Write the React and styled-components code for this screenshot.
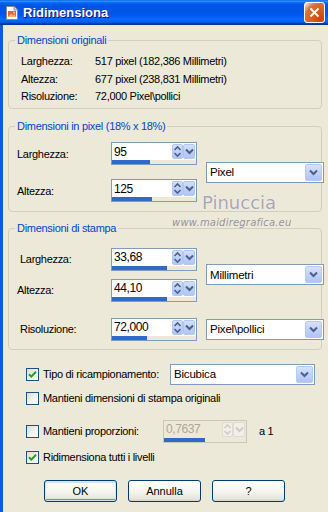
import React from "react";
import styled, { createGlobalStyle } from "styled-components";

const FONT = `"Liberation Sans", Arial, sans-serif`;

const Global = createGlobalStyle`
  html, body { margin: 0; padding: 0; background: #ECE9D8; }
  body { width: 328px; height: 512px; overflow: hidden; }
  *, *::before, *::after { box-sizing: border-box; }
`;

const Window = styled.div`
  width: 328px;
  height: 512px;
  display: flex;
  flex-direction: column;
  background: #ECE9D8;
  font-family: ${FONT};
  font-size: 11px;
  letter-spacing: -0.3px;
  color: #000;
  position: relative;
  overflow: hidden;
`;

const TitleBar = styled.div`
  height: 25px;
  flex: none;
  display: flex;
  align-items: center;
  padding: 0 3px 0 4px;
  background: linear-gradient(180deg, #0058EE 0%, #3593FF 4%, #288EFF 6%, #127DFF 8%, #036FFC 10%, #0262EE 14%, #0057E5 20%, #0054E3 24%, #0055EB 56%, #005BF5 66%, #026AFE 76%, #0062EF 86%, #0052D6 92%, #0040AB 94%, #003092 100%);
`;

const TitleIcon = styled.svg`
  flex: none;
  margin-right: 3px;
`;

const TitleText = styled.span`
  flex: 1;
  color: #fff;
  font-weight: bold;
  font-size: 13px;
  letter-spacing: 0;
  text-shadow: 1px 1px 0 #0F1089;
`;

const CloseButton = styled.div`
  width: 21px;
  height: 21px;
  border: 1px solid #fff;
  border-radius: 3px;
  display: flex;
  align-items: center;
  justify-content: center;
  background: radial-gradient(circle at 85% 85%, #cc4600 0%, #dc6527 55%, #cd7546 70%, #ffccb2 92%, #fff 100%);
`;

const Body = styled.div`
  flex: 1;
  display: flex;
  flex-direction: column;
  border-left: 3px solid #1656E6;
  padding: 0 6px 0 5px;
`;

const Group = styled.fieldset`
  margin: ${(p) => p.$mt}px 0 0;
  padding: 0;
  border: 1px solid #D0D0BF;
  border-radius: 4px;
  min-width: 0;
`;

const Legend = styled.legend`
  margin-left: 6px;
  padding: 0 2px;
  color: #0046D5;
  font-size: 11px;
  line-height: 13px;
`;

const InfoGrid = styled.div`
  display: grid;
  grid-template-columns: 74px 1fr;
  grid-auto-rows: 17.5px;
  align-items: center;
  padding: 5.5px 0 3px 12px;
`;

const SizeGrid = styled.div`
  display: grid;
  grid-template-columns: 93px 86px 118px;
  column-gap: 9px;
  row-gap: ${(p) => p.$rowGap || 0}px;
  align-items: center;
  padding: ${(p) => p.$pt}px 0 ${(p) => p.$pb}px 0;
`;

const FieldLabel = styled.span`
  padding-left: ${(p) => p.$indent}px;
  grid-column: 1;
`;

const SelectCell = styled.div`
  grid-column: 3;
  grid-row: ${(p) => p.$rows};
  align-self: center;
`;

const SpinBox = styled.div`
  width: ${(p) => p.$w || 86}px;
  height: 23px;
  flex: none;
  border: 1px solid ${(p) => (p.$disabled ? "#C9C7BA" : "#7F9DB9")};
  background: ${(p) => (p.$disabled ? "#ECE9D8" : "#fff")};
  display: flex;
  flex-direction: column;
`;

const SpinField = styled.div`
  flex: 1;
  display: flex;
  align-items: center;
  gap: 0;
  padding: 0 1px 0 2px;
`;

const SpinValue = styled.span`
  flex: 1;
  font-size: 12px;
  letter-spacing: -0.4px;
  color: ${(p) => (p.$disabled ? "#ACA899" : "#000")};
`;

const ArrowButton = styled.div`
  width: ${(p) => p.$w}px;
  height: 15px;
  border-radius: 2px;
  border: 1px solid ${(p) => (p.$disabled ? "#DEDCD2" : "#B1C6F2")};
  background: ${(p) =>
    p.$disabled
      ? "#F1EFE7"
      : "linear-gradient(180deg, #D3DFFD 0%, #BED0FA 50%, #B2C6F7 100%)"};
  display: flex;
  flex-direction: column;
  align-items: center;
  justify-content: center;
`;

const Track = styled.div`
  height: 4px;
  flex: none;
  background: #ECE9D8;
`;

const Fill = styled.div`
  height: 100%;
  background: #3169C6;
`;

const SelectBox = styled.div`
  width: ${(p) => p.$w}px;
  height: 21px;
  flex: none;
  margin-left: ${(p) => (p.$push ? "auto" : "0")};
  border: 1px solid #7F9DB9;
  background: #fff;
  display: flex;
  align-items: center;
  padding: 1px;
`;

const SelectText = styled.span`
  flex: 1;
  padding-left: 2px;
  font-size: 11.5px;
  letter-spacing: -0.2px;
`;

const SelectButton = styled.div`
  width: 17px;
  height: 17px;
  border-radius: 2px;
  border: 1px solid #B7CAF5;
  background: linear-gradient(180deg, #D6E2FD 0%, #C0D1FA 50%, #AFC4F6 100%);
  display: flex;
  align-items: center;
  justify-content: center;
`;

const Options = styled.div`
  display: flex;
  flex-direction: column;
  padding: 13.5px 7px 0 18px;
`;

const OptionRow = styled.div`
  display: flex;
  align-items: center;
  height: ${(p) => p.$h}px;
  margin-top: ${(p) => p.$mt || 0}px;
`;

const CheckBox = styled.span`
  width: 13px;
  height: 13px;
  flex: none;
  border: 1px solid #1C5180;
  background: linear-gradient(135deg, #DCDCD7 0%, #F4F4F0 60%, #FFFFFF 100%);
  display: flex;
  align-items: center;
  justify-content: center;
`;

const CheckText = styled.span`
  margin-left: 4px;
  width: ${(p) => (p.$w ? `${p.$w - 4}px` : "auto")};
  flex: none;
  white-space: nowrap;
`;

const Suffix = styled.span`
  margin-left: 12px;
`;

const ButtonRow = styled.div`
  display: flex;
  gap: 11px;
  padding-left: 36px;
  margin-top: 16.5px;
`;

const Button = styled.button`
  width: 73px;
  height: 22px;
  padding: 0;
  font-family: ${FONT};
  font-size: 11px;
  color: #000;
  border: 1px solid #003C74;
  border-radius: 3px;
  background: linear-gradient(180deg, #FFFFFF 0%, #F5F4EF 55%, #E6E4DA 90%, #D6D0C5 100%);
  box-shadow: ${(p) =>
    p.$default
      ? "inset 0 0 0 1px #CEE7FF, inset 0 -2px 0 0 #6982EE, inset 0 2px 0 0 #CEE7FF"
      : "none"};
`;

const Watermark = styled.div`
  position: absolute;
  left: 172px;
  top: 193px;
  display: flex;
  flex-direction: column;
  pointer-events: none;
  font-family: "DejaVu Sans", sans-serif;
  letter-spacing: 0;
`;

const WatermarkName = styled.span`
  margin-left: 30px;
  font-size: 18px;
  line-height: 20px;
  color: rgba(150, 150, 172, 0.85);
  text-shadow: 0 0 1px #fff;
`;

const WatermarkUrl = styled.span`
  margin-top: 3.5px;
  font-size: 10px;
  line-height: 12px;
  font-style: italic;
  letter-spacing: 0.2px;
  color: rgba(130, 130, 150, 0.85);
`;

function UpDown({ disabled }) {
  const c = disabled ? "#CFCDC3" : "#4D6185";
  return (
    <ArrowButton $w={11} $disabled={disabled}>
      <svg width="9" height="13" viewBox="0 0 9 13">
        <path d="M1.5 5 L4.5 2 L7.5 5" stroke={c} strokeWidth="1.6" fill="none" />
        <path d="M1.5 8 L4.5 11 L7.5 8" stroke={c} strokeWidth="1.6" fill="none" />
      </svg>
    </ArrowButton>
  );
}

function Chevron({ color = "#4D6185", size = 9 }) {
  return (
    <svg width={size} height="7" viewBox="0 0 9 7">
      <path d="M1 1.5 L4.5 5 L8 1.5" stroke={color} strokeWidth="2" fill="none" />
    </svg>
  );
}

function SpinInput({ value, fill, w, disabled }) {
  return (
    <SpinBox $w={w} $disabled={disabled}>
      <SpinField>
        <SpinValue $disabled={disabled}>{value}</SpinValue>
        <UpDown disabled={disabled} />
        <ArrowButton $w={12} $disabled={disabled}>
          <Chevron color={disabled ? "#CFCDC3" : "#4D6185"} />
        </ArrowButton>
      </SpinField>
      <Track>
        <Fill style={{ width: `${fill}%` }} />
      </Track>
    </SpinBox>
  );
}

function Select({ value, w, push }) {
  return (
    <SelectBox $w={w} $push={push}>
      <SelectText>{value}</SelectText>
      <SelectButton>
        <Chevron />
      </SelectButton>
    </SelectBox>
  );
}

function Check({ checked }) {
  return (
    <CheckBox>
      {checked && (
        <svg width="9" height="9" viewBox="0 0 9 9">
          <path d="M1 4.2 L3.3 6.6 L8 1.8" stroke="#21A121" strokeWidth="2" fill="none" />
        </svg>
      )}
    </CheckBox>
  );
}

export default function App() {
  return (
    <>
      <Global />
      <Window>
        <TitleBar>
          <TitleIcon width="16" height="16" viewBox="0 0 16 16">
            <path d="M2.5 1.5 H10 L13.5 5 V14.5 H2.5 Z" fill="#FDFDFB" stroke="#8A8A8A" />
            <path d="M10 1.5 V5 H13.5" fill="#DADADA" stroke="#8A8A8A" />
            <rect x="4" y="6" width="8" height="6" fill="#E0623C" />
            <path d="M4 12 L7 8.5 L9 10.5 L10.5 9 L12 12 Z" fill="#F6B36A" />
            <circle cx="10" cy="7.6" r="0.9" fill="#FCE3A2" />
          </TitleIcon>
          <TitleText>Ridimensiona</TitleText>
          <CloseButton>
            <svg width="11" height="11" viewBox="0 0 11 11">
              <path d="M1.5 1.5 L9.5 9.5 M9.5 1.5 L1.5 9.5" stroke="#fff" strokeWidth="2" />
            </svg>
          </CloseButton>
        </TitleBar>

        <Body>
          <Group $mt={9}>
            <Legend>Dimensioni originali</Legend>
            <InfoGrid>
              <span>Larghezza:</span>
              <span>517 pixel (182,386 Millimetri)</span>
              <span>Altezza:</span>
              <span>677 pixel (238,831 Millimetri)</span>
              <span>Risoluzione:</span>
              <span>72,000 Pixel\pollici</span>
            </InfoGrid>
          </Group>

          <Group $mt={10.5}>
            <Legend>Dimensioni in pixel (18% x 18%)</Legend>
            <SizeGrid $pt={9.5} $pb={9} $rowGap={14}>
              <FieldLabel $indent={8}>Larghezza:</FieldLabel>
              <SpinInput value="95" fill={45} />
              <SelectCell $rows="1 / span 2">
                <Select value="Pixel" w={118} />
              </SelectCell>
              <FieldLabel $indent={8}>Altezza:</FieldLabel>
              <SpinInput value="125" fill={48} />
            </SizeGrid>
          </Group>

          <Group $mt={10}>
            <Legend>Dimensioni di stampa</Legend>
            <SizeGrid $pt={12.5} $pb={0} $rowGap={8}>
              <FieldLabel $indent={11}>Larghezza:</FieldLabel>
              <SpinInput value="33,68" fill={65} />
              <SelectCell $rows="1 / span 2">
                <Select value="Millimetri" w={118} />
              </SelectCell>
              <FieldLabel $indent={8}>Altezza:</FieldLabel>
              <SpinInput value="44,10" fill={65} />
            </SizeGrid>
            <SizeGrid $pt={16} $pb={8.5}>
              <FieldLabel $indent={11}>Risoluzione:</FieldLabel>
              <SpinInput value="72,000" fill={42} />
              <SelectCell $rows="1">
                <Select value="Pixel\pollici" w={118} />
              </SelectCell>
            </SizeGrid>
          </Group>

          <Options>
            <OptionRow $h={21}>
              <Check checked />
              <CheckText>Tipo di ricampionamento:</CheckText>
              <Select value="Bicubica" w={145} push />
            </OptionRow>
            <OptionRow $h={13} $mt={7}>
              <Check />
              <CheckText>Mantieni dimensioni di stampa originali</CheckText>
            </OptionRow>
            <OptionRow $h={23} $mt={15}>
              <Check />
              <CheckText $w={124}>Mantieni proporzioni:</CheckText>
              <SpinInput value="0,7637" fill={50} w={84} disabled />
              <Suffix>a 1</Suffix>
            </OptionRow>
            <OptionRow $h={13} $mt={8}>
              <Check checked />
              <CheckText>Ridimensiona tutti i livelli</CheckText>
            </OptionRow>
          </Options>

          <ButtonRow>
            <Button $default>OK</Button>
            <Button>Annulla</Button>
            <Button>?</Button>
          </ButtonRow>
        </Body>

        <Watermark>
          <WatermarkName>Pinuccia</WatermarkName>
          <WatermarkUrl>www.maidiregrafica.eu</WatermarkUrl>
        </Watermark>
      </Window>
    </>
  );
}
